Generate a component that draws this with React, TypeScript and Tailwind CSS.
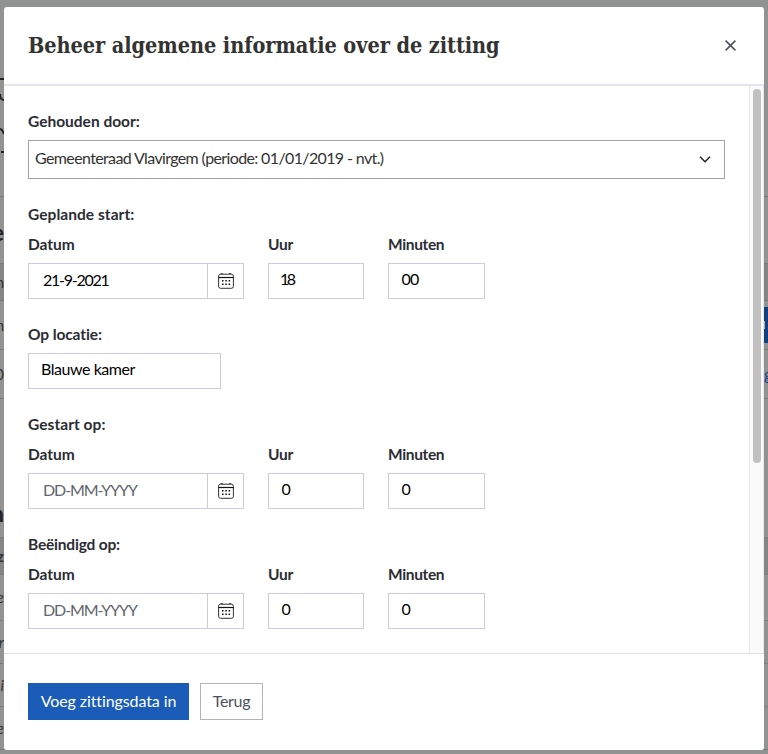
import React from "react";

const sans = "font-['Lato','Liberation_Sans',sans-serif]";
const serif = "font-['DejaVu_Serif_Condensed','DejaVu_Serif',serif]";

function CalendarIcon() {
  return (
    <svg width="16" height="16" viewBox="0 0 16 16" fill="none" stroke="#333332">
      <rect x="0.6" y="1.2" width="14.8" height="14.1" rx="2" />
      <path d="M0.5 4.5h15" stroke="#111" strokeWidth="1.2" />
      <path d="M2.8 0.7h2M11.2 0.7h2" stroke="#333" />
      <g fill="#111" stroke="none">
        <rect x="4" y="7" width="1.5" height="1.5" />
        <rect x="7.3" y="7" width="1.5" height="1.5" />
        <rect x="10.6" y="7" width="1.5" height="1.5" />
        <rect x="4" y="10.5" width="1.5" height="1.5" />
        <rect x="7.3" y="10.5" width="1.5" height="1.5" />
        <rect x="10.6" y="10.5" width="1.5" height="1.5" />
      </g>
    </svg>
  );
}

function Label({ children, className = "" }: { children: string; className?: string }) {
  return (
    <div className={`h-[30px] text-[15.5px] leading-[30px] font-bold whitespace-nowrap text-[#2b2d33] ${className}`}>
      {children}
    </div>
  );
}

function NumberField({ label, value, className, labelClass }: { label: string; value: string; className: string; labelClass: string }) {
  return (
    <div className={className}>
      <Label className={labelClass}>{label}</Label>
      <div
        className={`mt-[4px] h-9 border border-[#cbcdda] text-base leading-[30px] text-black ${
          value === "18" ? "pl-[11px] tracking-[-2.5px]" : "pl-[12.5px] tracking-[-0.9px]"
        }`}
      >
        {value}
      </div>
    </div>
  );
}

function DateTimeGroup({ title, titleClass, date, hour, minutes }: { title: string; titleClass: string; date?: string; hour: string; minutes: string }) {
  return (
    <section className="h-[120px]">
      <Label className={titleClass}>{title}</Label>
      <div className="flex">
        <div className="w-[216px]">
          <Label className="tracking-[-0.05px]">Datum</Label>
          <div className="mt-[4px] flex h-9 border border-[#cbcdda]">
            <div
              className={`w-[179px] border-r border-[#cbcdda] pl-[14px] text-base leading-[31px] ${
                date ? "tracking-[-1.25px] text-black" : "tracking-[-1.1px] text-[#61646b]"
              }`}
            >
              {date ?? "DD-MM-YYYY"}
            </div>
            <div className="flex flex-1 items-center justify-center">
              <CalendarIcon />
            </div>
          </div>
        </div>
        <NumberField label="Uur" value={hour} className="ml-6 w-24" labelClass="tracking-[-0.3px]" />
        <NumberField label="Minuten" value={minutes} className="ml-6 w-[97px]" labelClass="tracking-[-0.35px]" />
      </div>
    </section>
  );
}

function Strip({ height, className = "", children }: { height: string; className?: string; children?: React.ReactNode }) {
  return <div className={`flex w-full shrink-0 items-center justify-end overflow-hidden ${height} ${className}`}>{children}</div>;
}

function LeftPage() {
  return (
    <div className="flex w-1 shrink-0 flex-col overflow-hidden bg-[#949392] text-[15px] text-[#333]">
      <Strip height="h-[62px]" />
      <Strip height="h-[42px]">
        <svg width="4" height="26" viewBox="0 0 4 26" fill="none" stroke="#222" strokeWidth="2">
          <path d="M0 2h4M0 17c0 4 1.500 6 4 6" />
        </svg>
      </Strip>
      <Strip height="h-[60px]">
        <svg width="4" height="26" viewBox="0 0 4 26" fill="none" stroke="#222" strokeWidth="2">
          <path d="M0 1c2 0 3 2 4 5M1 24h3" />
        </svg>
      </Strip>
      <Strip height="h-[26px]" className="border-b border-[#777]" />
      <Strip height="h-[66px]" className="pt-1"><span className="text-[22px] font-bold text-[#222]">e</span></Strip>
      <Strip height="h-[38px]" className="border-y border-[#7b7b7b] bg-[#858585]">n</Strip>
      <Strip height="h-[49px]" className="border-b border-[#7b7b7b]">n</Strip>
      <Strip height="h-[49px]" className="border-b border-[#7b7b7b]">0</Strip>
      <Strip height="h-[90px]" />
      <Strip height="h-[48px]"><span className="text-[22px] font-bold text-[#222]">n</span></Strip>
      <Strip height="h-[38px]" className="border-y border-[#7b7b7b] bg-[#858585] font-bold">z</Strip>
      <Strip height="h-[46px]" className="border-b border-dotted border-[#777] italic">e</Strip>
      <Strip height="h-[43px]" className="border-b border-dotted border-[#777] italic">r</Strip>
      <Strip height="h-[43px]" className="border-b border-dotted border-[#777] italic">i</Strip>
      <Strip height="h-[43px]" className="border-b border-[#777] italic">e</Strip>
    </div>
  );
}

function RightPage() {
  return (
    <div className="flex w-1 shrink-0 flex-col overflow-hidden bg-[#919292] text-[15px]">
      <Strip height="h-[190px]" className="border-b border-[#777]" />
      <Strip height="h-[66px]" />
      <Strip height="h-[38px]" className="border-y border-[#7b7b7b] bg-[#858585]" />
      <Strip height="h-[6px]" />
      <Strip height="h-[36px]" className="bg-[#123f7e]"><span className="mr-[3px] h-2 w-px bg-[#aaa]" /></Strip>
      <Strip height="h-[7px]" className="border-b border-[#7b7b7b]" />
      <div className="flex h-[49px] shrink-0 items-center justify-start overflow-hidden border-b border-[#7b7b7b] text-base text-[#1a4484]">g</div>
      <Strip height="h-[138px]" />
      <Strip height="h-[38px]" className="border-y border-[#7b7b7b] bg-[#858585]" />
      <Strip height="h-[46px]" className="border-b border-dotted border-[#777]" />
      <Strip height="h-[43px]" className="border-b border-dotted border-[#777]" />
      <Strip height="h-[43px]" className="border-b border-dotted border-[#777]" />
      <Strip height="h-[43px]" className="border-b border-[#777]" />
    </div>
  );
}

export default function App() {
  return (
    <div className={`flex h-[754px] w-[768px] flex-col overflow-hidden bg-[#919392] ${sans}`}>
      <div className="h-[7px] shrink-0" />
      <div className="flex h-[743px] shrink-0 bg-[#939393]">
        <LeftPage />
        <main className="flex w-[760px] flex-col rounded-[3px] bg-white">
          <header className="flex h-[79px] shrink-0 items-center justify-between border-b-2 border-[#e5e6eb] pr-7 pl-6">
            <h1 className={`text-[21.5px] leading-[30px] font-bold tracking-[-0.06px] whitespace-nowrap text-[#333332] ${serif}`}>
              Beheer algemene informatie over de zitting
            </h1>
            <svg width="11" height="11" viewBox="0 0 11 11" fill="none" stroke="#4d515c" strokeWidth="1.5">
              <path d="M0.6 0.6l9.8 9.8M10.4 0.6L0.6 10.4" />
            </svg>
          </header>
          <div className="flex h-[567px] shrink-0">
            <div className="w-[745px] pt-5 pl-6">
              <Label>Gehouden door:</Label>
              <div className="mt-1 flex h-[39px] w-[697px] items-center justify-between border border-[#a2a2a2] pr-[13px] pl-1.5">
                <span className="-mt-1 text-base tracking-[-0.63px] whitespace-nowrap text-[#333332]">
                  Gemeenteraad Vlavirgem (periode: 01/01/2019 - nvt.)
                </span>
                <svg width="12" height="7" viewBox="0 0 12 7" fill="none" stroke="#222" strokeWidth="1.5">
                  <path d="M1 0.8l5 5 5-5" />
                </svg>
              </div>
              <div className="pt-5">
                <DateTimeGroup title="Geplande start:" titleClass="tracking-[0.05px]" date="21-9-2021" hour="18" minutes="00" />
                <section className="h-[90px]">
                  <Label className="tracking-[-0.1px]">Op locatie:</Label>
                  <div className="mt-[4px] h-9 w-[193px] border border-[#cbcdda] pl-3 text-base leading-[30px] tracking-[-0.45px] text-black">
                    Blauwe kamer
                  </div>
                </section>
                <DateTimeGroup title="Gestart op:" titleClass="tracking-[0.05px]" hour="0" minutes="0" />
                <DateTimeGroup title="Beëindigd op:" titleClass="tracking-[-0.2px]" hour="0" minutes="0" />
              </div>
            </div>
            <div className="w-[15px] border-r border-l border-[#e8e8e8] bg-[#fafafa] pt-[3px] pl-[3px]">
              <div className="h-[374px] w-2 rounded-full bg-[#c1c1c1]" />
            </div>
          </div>
          <footer className="flex flex-1 border-t border-[#dfe0e3] pt-[29px] pl-6">
            <button className="h-[37px] w-[161px] bg-[#1a5cb8] pb-0.5 text-base leading-[34px] tracking-[-0.1px] whitespace-nowrap text-white">
              Voeg zittingsdata in
            </button>
            <button className="ml-[11px] h-[37px] w-[63px] border border-[#b2b4b9] pb-0.5 text-base leading-[33px] tracking-[-0.3px] text-[#4d515c]">
              Terug
            </button>
          </footer>
        </main>
        <RightPage />
      </div>
    </div>
  );
}
